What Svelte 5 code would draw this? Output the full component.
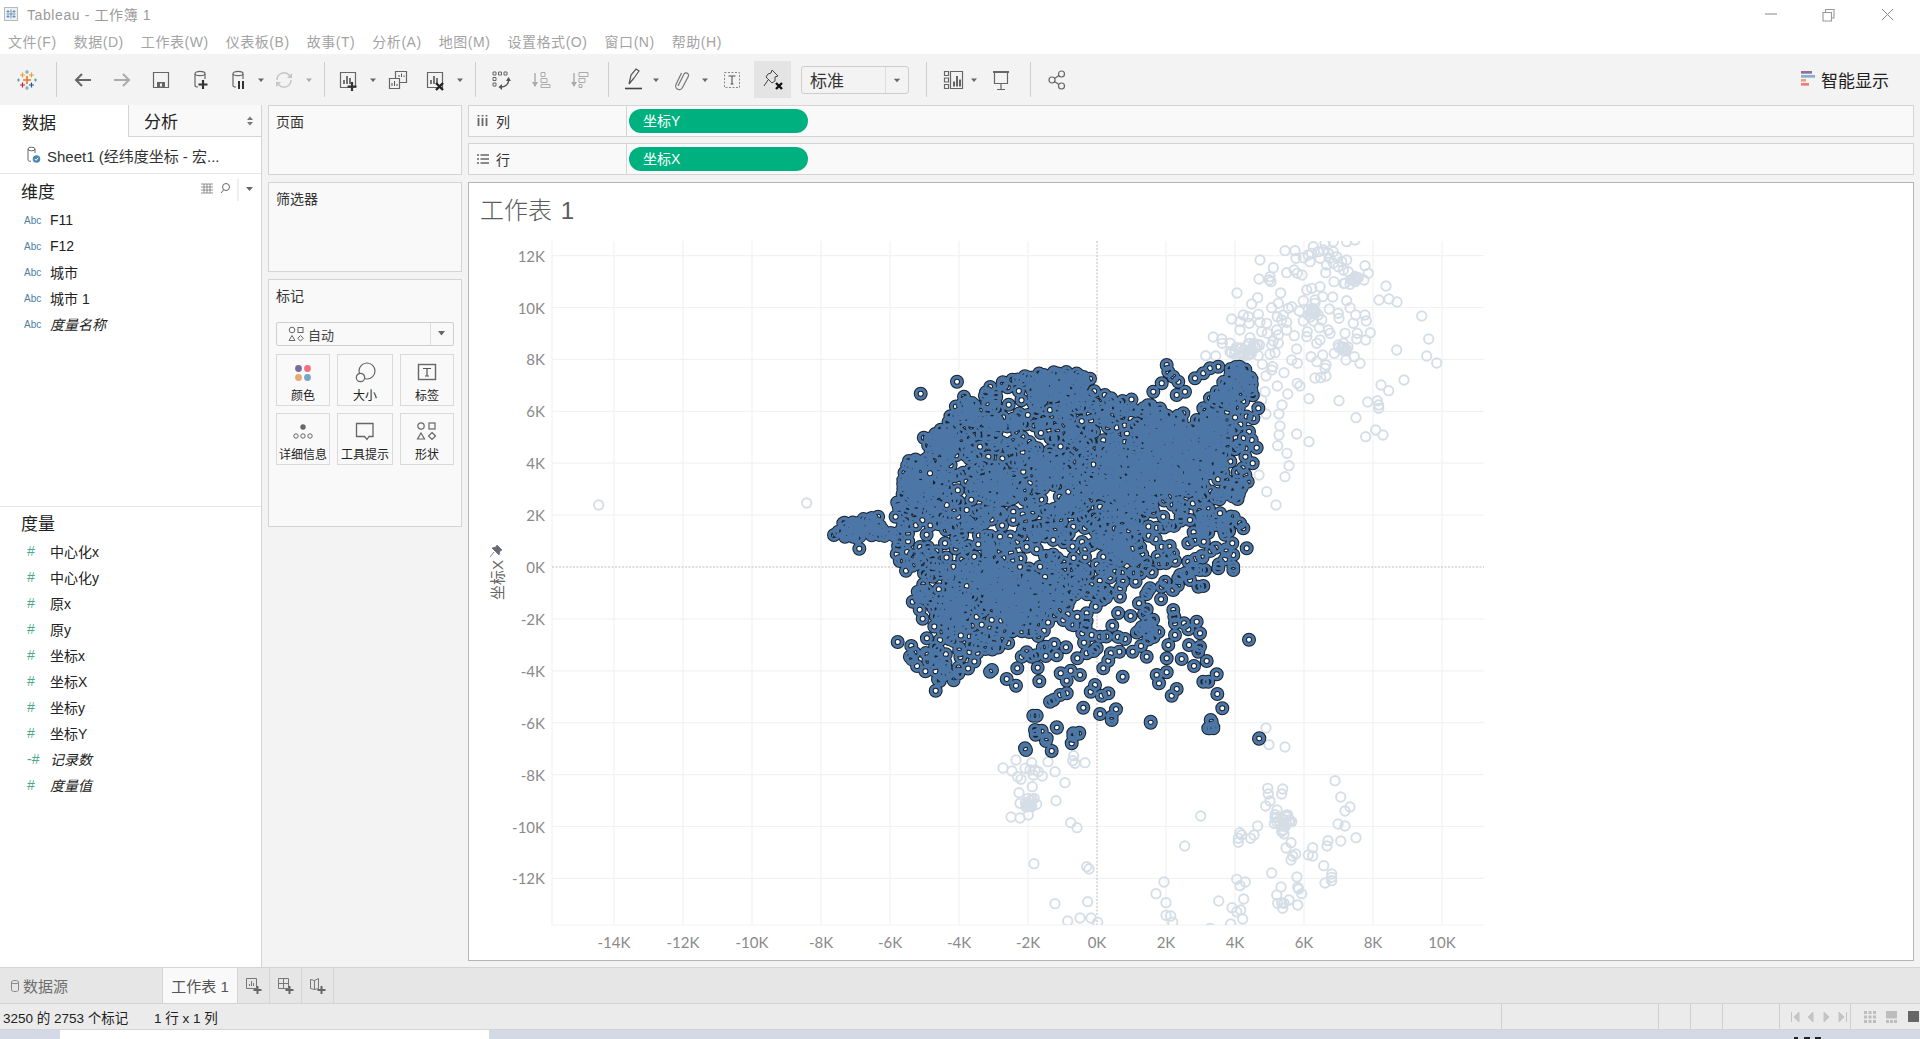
<script>
  const menus = ["文件(F)", "数据(D)", "工作表(W)", "仪表板(B)", "故事(T)", "分析(A)", "地图(M)", "设置格式(O)", "窗口(N)", "帮助(H)"];
  const dims = [["F11"], ["F12"], ["城市"], ["城市 1"], ["度量名称", true]];
  const measures = [["中心化x"], ["中心化y"], ["原x"], ["原y"], ["坐标x"], ["坐标X"], ["坐标y"], ["坐标Y"], ["记录数", true], ["度量值", true]];

  const S = 'fill="none" stroke="#666" stroke-width="1.2"';
  const cyl = `<path d="M7 6v11.5c0 1 1 1.5 3 1.5M17 6v5" ${S}/><ellipse cx="12" cy="5.5" rx="5" ry="2.2" ${S}/>`;
  const bars = `<path d="M8 16v-4M11 16V8M14 16v-6" stroke="#555" stroke-width="1.6"/>`;
  const icons = {
    logo: `<g stroke-width="1.2" fill="none"><path d="M12 8v8M8 12h8" stroke="#e8762b" stroke-width="1.6"/><path d="M7.500 4.500v5M5 7h5M16.500 4.500v5M14 7h5" stroke="#e8a32b"/><path d="M7.500 14.500v5M5 17h5" stroke="#c72035"/><path d="M16.500 14.500v5M14 17h5" stroke="#1f5a96"/><path d="M12 2v4M10 4h4M12 18v4M10 20h4" stroke="#7c9fb5"/><path d="M3.500 10.500v3M2 12h3M20.500 10.500v3M19 12h3" stroke="#5b9ea6"/></g>`,
    back: `<path d="M20 12H5M11 6l-6 6 6 6" fill="none" stroke="#666" stroke-width="2"/>`,
    forward: `<path d="M4 12h15M13 6l6 6-6 6" fill="none" stroke="#aaa" stroke-width="2"/>`,
    save: `<path d="M4.500 4.500h15v15h-15z" ${S}/><path d="M8 14h8v5.500H8z" fill="#666"/><path d="M11 15.500h2v3h-2z" fill="#f3f3f3"/>`,
    addds: `${cyl}<path d="M15 12v9M10.500 16.500h9" stroke="#333" stroke-width="2.200"/>`,
    pause: `${cyl}<path d="M13 13v8M17 13v8" stroke="#333" stroke-width="2"/>`,
    refresh: `<path d="M5 12a7 7 0 0 1 12-5l2 2M19 12a7 7 0 0 1-12 5l-2-2" fill="none" stroke="#c4c4c4" stroke-width="1.400"/><path d="M20 5v5h-5zM4 19v-5h5z" fill="#c4c4c4"/>`,
    sheet: `<path d="M4.500 4.500h15v15h-15z" ${S}/>${bars}<path d="M16 14v9M11.500 18.500h9" stroke="#333" stroke-width="2.200"/>`,
    dup: `<path d="M9.500 3.500h11v11h-11z" ${S}/><path d="M3.500 10.500h10v10h-10z" fill="#f3f3f3" stroke="#666" stroke-width="1.200"/><path d="M13 9V7M15.500 9V5.500M18 9V7.500" stroke="#555"/><path d="M6 18v-3M8.500 18v-5M11 18v-2" stroke="#555"/>`,
    clear: `<path d="M4.500 4.500h15v15h-15z" ${S}/>${bars}<path d="M13 15l7 7M20 15l-7 7" stroke="#222" stroke-width="2.400"/>`,
    swap: `<path d="M4 4h3v3H4zM9.500 4h3v3h-3zM15 4h3v3h-3zM4 9.500h3v3H4zM4 15h3v3H4z" fill="none" stroke="#666" stroke-width="1"/><path d="M19.500 10c1 5-2 9-8 9" fill="none" stroke="#555" stroke-width="1.200"/><path d="M13 16l-3.500 3 3.500 3zM17 13l2.500-4 2.500 4z" fill="#555"/>`,
    asc: `<path d="M6 5v13" stroke="#aaa" stroke-width="1.400"/><path d="M3 14l3 5 3-5z" fill="#aaa"/><path d="M12 4.500h4v4h-4zM12 10.500h6v4h-6zM12 16.500h9v3h-9z" fill="none" stroke="#aaa"/>`,
    desc: `<path d="M6 5v13" stroke="#aaa" stroke-width="1.400"/><path d="M3 14l3 5 3-5z" fill="#aaa"/><path d="M11 4.500h9v4h-9zM11 10.500h6v4h-6zM11 16.500h3v3h-3z" fill="none" stroke="#aaa"/>`,
    pen: `<path d="M7 16l2-9 5-6 3 2-5 7zM7 16l5-6" fill="none" stroke="#555" stroke-width="1.200"/><path d="M3 20.500h17" stroke="#444" stroke-width="1.600"/>`,
    clip: `<path d="M9 18L15 6a2.500 2.500 0 0 1 4.500 2L13.500 19.500a3.500 3.500 0 0 1-6.500-3L12.500 5" fill="none" stroke="#777" stroke-width="1.200"/>`,
    text: `<path d="M4.500 4.500h15v15h-15z" fill="none" stroke="#888" stroke-dasharray="2 1.500"/><path d="M8.500 8h7M12 8v8M10.500 16h3" fill="none" stroke="#555" stroke-width="1.100"/>`,
    pinx: `<path d="M11 2l6 6-3 1 0 4-3 2-6-6 2-3 3-1zM7 12l-4 6" fill="none" stroke="#444" stroke-width="1"/><path d="M15 15l6 6M21 15l-6 6" stroke="#111" stroke-width="2.400"/>`,
    showme: `<path d="M3.500 3.500h4v4h-4zM3.500 10h4v4h-4zM3.500 16.500h4v4h-4zM9.500 3.500h12v17h-12z" fill="none" stroke="#666" stroke-width="1.200"/><path d="M13 18.500v-5M16 18.500V8M19 18.500v-7" stroke="#555" stroke-width="1.800"/>`,
    present: `<path d="M4 4h16" stroke="#666" stroke-width="2"/><path d="M5.500 4.500v11h13v-11M12 15.500v6M8 21.500h8" fill="none" stroke="#666" stroke-width="1.200"/>`,
    share: `<circle cx="7" cy="12" r="3" ${S}/><circle cx="16.500" cy="6" r="3" ${S}/><circle cx="16.500" cy="18" r="3" ${S}/><path d="M9.500 10.500l4.500-3M9.500 13.500l4.500 3" ${S}/>`,
    caret: `<path d="M9 10.500h6l-3 3.500z" fill="#666"/>`,
    caretoff: `<path d="M9 10.500h6l-3 3.500z" fill="#aaa"/>`
  };

  // toolbar items by their centre on the bar, the gap before each one comes from that
  const raw = [
    [27, "logo"], [56, "sep"], [83, "back"], [122, "forward"], [161, "save"], [200, "addds"], [237.5, "pause"], [261, "caret"],
    [284, "refresh"], [309, "caretoff"], [324.5, "sep"], [348, "sheet"], [373, "caret"], [398, "dup"], [435, "clear"], [460, "caret"],
    [475.5, "sep"], [501, "swap"], [541, "asc"], [580, "desc"], [608, "sep"], [634, "pen"], [656, "caret"], [681, "clip"], [705, "caret"],
    [732, "text"], [772.5, "pinx"], [855, "select"], [926.5, "sep"], [953, "showme"], [974, "caret"], [1001, "present"], [1030, "sep"], [1057, "share"]
  ];
  const widthOf = (n) => (n === "sep" ? 1 : n === "select" ? 108 : n === "pinx" ? 37 : 24);
  let end = 0;
  const tools = raw.map(([c, name]) => {
    const w = widthOf(name);
    const gap = c - w / 2 - end;
    end = c + w / 2;
    return { name, w, gap };
  });

  // ---- scatter data, read off the reference ----
  const xTicks = [-14, -12, -10, -8, -6, -4, -2, 0, 2, 4, 6, 8, 10];
  const yTicks = [12, 10, 8, 6, 4, 2, 0, -2, -4, -6, -8, -10, -12];
  const px = (k) => 1097 + k * 34.5;
  const py = (k) => 567 - k * 25.95;

  const from = (ox, oy, list) => list.map(([x, y]) => [ox + x / 3, oy + y / 3]);
  const greyA = from(1190, 235, [[285,47],[315,47],[210,75],[250,98],[207,132],[240,125],[238,135],[243,140],[290,113],[312,105],[322,115],[336,120],[318,70],[340,68],[355,60],[370,35],[385,50],[400,45],[415,55],[430,50],[440,65],[455,80],[470,75],[360,80],[410,90],[430,85],[445,95],[460,105],[475,110],[525,92],[535,115],[407,113],[432,140],[465,145],[480,148],[495,140],[505,128],[522,135],[588,153],[567,195],[597,192],[621,201],[141,174],[203,188],[185,207],[272,174],[350,165],[365,160],[390,155],[340,197],[375,195],[398,185],[428,186],[470,197],[480,218],[245,218],[265,205],[295,220],[305,215],[328,228],[418,222],[445,235],[447,250],[125,252],[160,240],[175,245],[205,238],[150,260],[178,265],[210,262],[230,265],[262,245],[280,240],[275,255],[290,262],[340,258],[355,240],[370,235],[385,240],[395,255],[368,220],[375,205],[355,225],[497,240],[525,240],[529,258],[490,265],[695,243],[70,306],[95,312],[97,325],[150,285],[215,290],[232,295],[260,285],[290,285],[265,300],[313,302],[352,290],[350,305],[388,278],[415,285],[420,295],[465,295],[502,295],[500,312],[527,315],[541,293],[716,312],[180,308],[250,318],[245,330],[265,325],[380,325],[390,315],[320,342],[445,330],[455,340],[460,325],[470,345],[433,355],[620,345],[47,362],[77,363],[120,350],[135,345],[150,355],[170,350],[195,340],[240,358],[255,353],[363,365],[380,380],[398,360],[305,375],[322,385],[468,375],[493,365],[510,385],[710,363],[740,384],[217,388],[248,395],[245,405],[408,390],[405,400],[282,413],[228,423],[375,429],[392,428],[408,423],[322,445],[330,453],[262,453],[642,435],[573,450],[596,467],[225,470],[293,477],[357,491],[447,497],[533,501],[562,497],[566,510],[566,520],[276,510],[215,495],[228,537],[267,537],[498,548],[270,573],[267,600],[320,597],[357,620],[527,605],[557,585],[579,600],[263,632],[291,655],[297,692],[207,720],[285,725],[230,770],[258,810],[470,20],[495,15],[430,20],[405,25],[365,55],[390,70],[420,70]]);
  const greyB = from(980, 720, [[858,24],[867,74],[915,81],[108,120],[69,144],[96,153],[135,145],[155,128],[150,150],[165,150],[175,155],[187,168],[113,170],[123,178],[160,165],[204,125],[225,155],[281,107],[278,122],[285,130],[315,128],[255,188],[157,200],[117,218],[120,250],[145,235],[150,250],[140,255],[155,260],[170,253],[228,242],[145,285],[93,291],[120,294],[272,308],[291,323],[1065,182],[863,205],[865,222],[908,207],[905,222],[870,243],[857,258],[1082,231],[1110,261],[1095,273],[891,270],[885,292],[890,305],[905,295],[920,290],[930,300],[935,305],[900,315],[915,320],[910,330],[905,335],[912,342],[662,288],[833,318],[1074,312],[1095,318],[780,338],[785,345],[775,355],[775,367],[812,355],[822,345],[1128,353],[1082,363],[1044,362],[1041,378],[933,368],[918,384],[998,383],[985,405],[998,408],[947,402],[938,408],[933,420],[614,378],[1031,437],[162,431],[320,440],[327,447],[875,459],[1055,462],[1055,472],[1055,482],[1035,489],[951,471],[552,486],[770,478],[796,486],[780,497],[903,501],[953,502],[956,507],[965,521],[528,521],[890,525],[791,537],[716,543],[927,540],[893,550],[905,548],[912,550],[908,565],[953,555],[558,548],[225,551],[323,545],[756,563],[782,570],[770,575],[558,586],[572,588],[300,594],[333,594],[263,603],[353,607],[578,607],[788,597],[752,612],[690,625]]);
  const greyC = from(470, 480, [[386,75],[1010,69]]);

  const blueA = from(820, 340, [[302,161],[411,125],[432,170],[810,116],[1040,75],[1095,155],[1210,128],[1315,205],[1287,275],[1295,300],[1310,323],[1298,370],[1283,425],[1268,385],[1255,315],[118,626],[258,692],[293,755],[278,785],[233,906],[347,1052],[560,1017],[588,1037],[658,1024],[592,985],[605,950],[635,950],[653,983],[516,990],[510,995],[678,920],[703,912],[738,922],[677,948],[710,946],[722,1000],[752,992],[780,1005],[740,1022],[772,955],[800,940],[830,925],[792,908],[827,800],[800,820],[772,830],[797,860],[815,885],[840,890],[787,880],[865,962],[850,985],[898,935],[915,897],[938,935],[963,918],[980,950],[908,1010],[1040,955],[1085,957],[1122,978],[1160,963],[1045,915],[1107,915],[1140,920],[1135,935],[1140,880],[1105,868],[1065,885],[1092,850],[1130,845],[1060,810],[1063,830],[1065,850],[1287,899],[1040,997],[1010,1005],[1017,1030],[1070,1047],[1055,1067],[825,1035],[812,1055],[845,1067],[865,1060],[790,1103],[888,1108],[840,1122],[875,1130],[992,1145],[1207,1105],[1192,1062],[1190,1003],[1165,1025],[1150,1025],[700,1080],[690,1085],[720,1065],[740,1060],[710,1162],[640,1127],[650,1127],[645,1170],[665,1172],[680,1195],[760,1180],[778,1178],[1172,1140],[1165,1165],[1180,1165],[1318,1195],[1280,625],[1237,610],[1240,645],[1215,658],[1187,623],[1145,648],[1240,680],[1240,690],[1025,620],[1048,620],[1045,650],[1065,662],[1105,665],[1020,670],[1060,750],[1135,740],[1150,738],[1165,578],[1150,578],[1270,565],[1260,550],[1105,610],[1025,740],[990,745],[1155,690],[1195,685],[1105,700],[1125,115],[1150,100],[1170,85],[1195,80],[1075,125],[1060,110],[1045,95],[1025,130],[1000,155],[1070,165],[1090,220],[1130,240],[1150,205],[1170,175],[1190,155],[1210,165],[1230,185],[1300,235],[1080,705],[1095,700],[1120,690],[1140,690],[1075,715],[1110,720],[42,585],[55,575],[70,550],[75,590],[100,590],[105,550],[150,545],[180,570]]);
  const blueB = from(980, 720, [[231,23],[167,44],[185,35],[198,63],[215,93],[135,85],[138,90],[275,70],[280,48],[297,41],[512,8],[690,25],[700,22],[695,5],[837,56],[395,0]]);

  const outline = [[35,585],[70,545],[150,530],[215,515],[240,470],[240,400],[275,340],[305,295],[375,250],[410,195],[530,130],[650,95],[770,95],[850,155],[950,170],[1030,205],[1090,230],[1100,262],[1140,240],[1180,170],[1205,130],[1240,70],[1300,85],[1315,130],[1290,200],[1290,240],[1280,340],[1280,420],[1250,510],[1230,590],[1130,560],[1000,570],[970,640],[1000,700],[980,800],[1020,880],[990,910],[930,830],[880,780],[780,760],[680,880],[580,870],[540,930],[480,950],[430,1020],[350,1030],[270,960],[260,910],[300,880],[290,800],[300,720],[250,680],[210,630],[205,600],[120,600]];
  const insidePoly = (shape, x, y) => {
    let hit = false;
    for (let i = 0, j = shape.length - 1; i < shape.length; j = i++) {
      const [xi, yi] = shape[i], [xj, yj] = shape[j];
      if (yi > y !== yj > y && x < ((xj - xi) * (y - yi)) / (yj - yi) + xi) hit = !hit;
    }
    return hit;
  };
  const shape = from(820, 340, outline);
  const inside = (x, y) => insidePoly(shape, x, y);
  // looser parts of the mass where single rings still read
  const loose = [
    [[1000,570],[1130,560],[1230,590],[1240,680],[1150,740],[1060,760],[1000,790],[1000,700],[970,640]],
    [[780,760],[880,780],[930,830],[990,910],[940,950],[850,960],[780,900],[700,880]],
    [[580,870],[680,880],[720,900],[660,970],[560,960],[540,930]]
  ].map((p) => from(820, 340, p));

  let seed = 20240611;
  const rnd = () => (seed = (seed * 16807) % 2147483647) / 2147483647;

  // smooth solid patches of the mass (x, y, radius in the crop's scale)
  const solid = [[710,140,85],[290,420,65],[1080,320,140],[920,430,95],[600,760,95],[400,830,60],[1000,870,40],[900,620,40],[480,700,50],[700,390,50],[540,440,55],[370,300,50],[1250,110,50],[80,580,45],[150,560,30]].map(([x, y, r]) => [820 + x / 3, 340 + y / 3, r / 3]);

  // white centres that stay open inside the mass
  const holes = from(820, 340, [[505,350],[610,395],[745,455],[650,628],[795,652],[600,680],[400,680],[580,515],[620,620],[700,600],[760,560],[540,590],[440,510],[380,495],[330,400],[480,320],[690,210],[580,540],[850,650],[900,770],[470,830],[515,840],[360,900],[730,840],[1030,530],[1110,540],[1200,520],[840,500],[660,680]]);
  for (let n = 0; n < 140; n++) {
    const x = 830 + rnd() * 420, y = 400 + rnd() * 290;
    if (!inside(x, y)) continue;
    if (solid.some(([a, b, r]) => Math.hypot(a - x, b - y) < r)) continue;
    if (holes.some(([a, b]) => Math.hypot(a - x, b - y) < 13)) continue;
    holes.push([x, y]);
  }
  const blue = [...blueA, ...blueB, ...holes];
  for (let y = 360; y < 700; y += 5.2) {
    for (let x = 825; x < 1265; x += 5.2) {
      const a = x + (rnd() - 0.5) * 4.5, b = y + (rnd() - 0.5) * 4.5;
      if (!inside(a, b)) {
        if (loose.some((p) => insidePoly(p, a, b)) && rnd() < 0.13) blue.push([a, b]);
        continue;
      }
      if (holes.some(([p, q]) => Math.hypot(p - a, q - b) < 8)) continue;
      const dense = solid.some(([p, q, r]) => Math.hypot(p - a, q - b) < r);
      if (!dense && rnd() < 0.45) continue;
      blue.push([a, b]);
    }
  }
  const clump = (cx, cy, rx, ry, n) => Array.from({ length: n }, () => [cx + (rnd() - 0.5) * rx, cy + (rnd() - 0.5) * ry]);
  const grey = [...greyA, ...greyB, ...greyC,
    ...clump(1245, 350, 30, 14, 22), ...clump(1315, 315, 12, 12, 10), ...clump(1343, 347, 10, 8, 7), ...clump(1350, 280, 14, 8, 7),
    ...clump(1030, 803, 10, 10, 10), ...clump(1282, 820, 16, 12, 12)];

  const rings = (list, r) => list.map(([x, y]) => `M${(x - r).toFixed(1)} ${y.toFixed(1)}a${r} ${r} 0 1 0 ${2 * r} 0a${r} ${r} 0 1 0 ${-2 * r} 0`).join("");
  const greyPath = rings(grey, 4.7);
  const bluePath = rings(blue, 4.5);
</script>

<div class="app">
  <header class="titlebar">
    <svg class="appicon" width="16" height="16" viewBox="0 0 16 16">
      <rect x="1.500" y="1.500" width="13" height="13" fill="#eef1f4" stroke="#b9b9b9" />
      <path d="M8 3.500v9M3.500 8h9M5 4v3M3.500 5.500h3M11 4v3M9.500 5.500h3M5 9v3M3.500 10.500h3M11 9v3M9.500 10.500h3" stroke="#6b93b8" stroke-width="1" />
    </svg>
    <span class="apptitle">Tableau - 工作簿 1</span>
    <div class="winbtns">
      <svg width="129" height="24" viewBox="0 0 129 24">
        <path d="M0 11h12" stroke="#999" stroke-width="1.200" />
        <path d="M58 9.500h8.500v8.500h-8.500zM60.500 9V6.500h8.500v8.500h-2.500" fill="none" stroke="#999" stroke-width="1.100" />
        <path d="M117 6l11 11M128 6l-11 11" stroke="#888" />
      </svg>
    </div>
  </header>

  <nav class="menubar">
    {#each menus as m}<span>{m}</span>{/each}
  </nav>

  <div class="toolbar">
    {#each tools as t}
      <div class="tool" style="width:{t.w}px;margin-left:{t.gap}px">
        {#if t.name === "sep"}
          <i class="sep"></i>
        {:else if t.name === "select"}
          <div class="fitselect"><span>标准</span><b><svg width="24" height="24" viewBox="0 0 24 24"><path d="M8.500 10.500h7l-3.500 4z" fill="#666" /></svg></b></div>
        {:else if t.name === "pinx"}
          <div class="activebtn"><svg width="24" height="24" viewBox="0 0 24 24">{@html icons[t.name]}</svg></div>
        {:else}
          <svg width="24" height="24" viewBox="0 0 24 24">{@html icons[t.name]}</svg>
        {/if}
      </div>
    {/each}
    <div class="showme">
      <svg width="14" height="18" viewBox="0 0 14 18"><path d="M0 0h11v2.700H0z" fill="#8b739d" /><path d="M0 4h14v2.700H0z" fill="#8aaed1" /><path d="M0 8h5v2.700H0z" fill="#e6aa71" /><path d="M0 12h8v2.700H0z" fill="#f07a84" /></svg>
      <span>智能显示</span>
    </div>
  </div>

  <main class="body">
    <aside class="datapane">
      <div class="panetabs">
        <span class="ptab on">数据</span>
        <span class="ptab">分析<svg width="6" height="10" viewBox="0 0 6 10"><path d="M0 4l3-3.500L6 4zM0 6l3 3.500L6 6z" fill="#777" /></svg></span>
      </div>
      <div class="source">
        <svg width="16" height="18" viewBox="0 0 16 18"><path d="M2 3v11c0 .8 1 1.300 3 1.300M9 3v4" fill="none" stroke="#666" /><ellipse cx="5.500" cy="3" rx="3.500" ry="1.800" fill="none" stroke="#666" /><circle cx="10.500" cy="13" r="3.800" fill="#4e8ab0" /><path d="M8.800 13l1.300 1.300 2-2.500" fill="none" stroke="#fff" /></svg>
        <span>Sheet1 (经纬度坐标 - 宏...</span>
      </div>
      <section class="dims">
        <div class="sechead">
          <span>维度</span>
          <svg class="headtools" width="62" height="22" viewBox="0 0 62 22">
            <path d="M2 5h12M2 8h12M2 11h12M2 14h12M5 5v9M8 5v9M11 5v9" stroke="#777" stroke-width=".8" />
            <circle cx="27" cy="8" r="3.500" fill="none" stroke="#666" /><path d="M24.500 11l-2.500 3" stroke="#666" />
            <path d="M39 0v22" stroke="#ddd" />
            <path d="M47 8h7l-3.500 4z" fill="#666" />
          </svg>
        </div>
        {#each dims as [name, calc]}
          <div class="field"><span class="abc">Abc</span><span class:calc>{name}</span></div>
        {/each}
      </section>
      <section class="meas">
        <div class="sechead"><span>度量</span></div>
        {#each measures as [name, calc]}
          <div class="field">
            <span class="hash">{name === "记录数" ? "-#" : "#"}</span><span class:calc>{name}</span>
          </div>
        {/each}
      </section>
    </aside>

    <div class="cards">
      <div class="card pages"><h4>页面</h4></div>
      <div class="card filters"><h4>筛选器</h4></div>
      <div class="card marks">
        <h4>标记</h4>
        <div class="marktype">
          <svg width="16" height="16" viewBox="0 0 16 16"><circle cx="4" cy="4" r="2.800" fill="none" stroke="#666" /><rect x="10" y="1.500" width="5" height="5" fill="none" stroke="#666" /><path d="M4 9.500l3 5H1z" fill="none" stroke="#666" /><path d="M12.500 9.500l2.800 2.800-2.800 2.800-2.800-2.800z" fill="none" stroke="#666" /></svg>
          <span>自动</span>
          <b><svg width="10" height="6" viewBox="0 0 10 6"><path d="M1 0h7l-3.500 4.500z" fill="#666" /></svg></b>
        </div>
        <div class="markgrid">
          <div class="mbtn">
            <svg width="24" height="24" viewBox="0 0 24 24"><circle cx="7.500" cy="7.500" r="3.400" fill="#7c6a9c" /><circle cx="16.500" cy="7.500" r="3.400" fill="#f0717c" /><circle cx="7.500" cy="16.500" r="3.400" fill="#e6aa71" /><circle cx="16.500" cy="16.500" r="3.400" fill="#77a5cc" /></svg>
            <span>颜色</span>
          </div>
          <div class="mbtn">
            <svg width="24" height="24" viewBox="0 0 24 24"><circle cx="14" cy="10" r="8" fill="none" stroke="#666" stroke-width="1.200" /><circle cx="7.500" cy="16.500" r="4.200" fill="#f9f9f9" stroke="#666" stroke-width="1.200" /></svg>
            <span>大小</span>
          </div>
          <div class="mbtn">
            <svg width="24" height="24" viewBox="0 0 24 24"><rect x="3.500" y="3.500" width="17" height="15" fill="none" stroke="#666" stroke-width="1.400" /><path d="M8 7.500h8M12 7.500v7.500M10 15h4" fill="none" stroke="#555" stroke-width="1.200" /></svg>
            <span>标签</span>
          </div>
          <div class="mbtn">
            <svg width="24" height="24" viewBox="0 0 24 24"><circle cx="12" cy="7" r="2.700" fill="#666" /><circle cx="5" cy="16" r="2.200" fill="none" stroke="#666" /><circle cx="12" cy="16" r="2.200" fill="none" stroke="#666" /><circle cx="19" cy="16" r="2.200" fill="none" stroke="#666" /></svg>
            <span>详细信息</span>
          </div>
          <div class="mbtn">
            <svg width="24" height="24" viewBox="0 0 24 24"><path d="M3.500 3.500h16.500v13h-4l-2 3-2.500-3h-8z" fill="none" stroke="#666" stroke-width="1.300" /></svg>
            <span>工具提示</span>
          </div>
          <div class="mbtn">
            <svg width="24" height="24" viewBox="0 0 24 24"><circle cx="6" cy="6" r="3.200" fill="none" stroke="#666" stroke-width="1.200" /><rect x="14" y="3" width="6" height="6" fill="none" stroke="#666" stroke-width="1.200" /><path d="M6 13l3.500 6h-7z" fill="none" stroke="#666" stroke-width="1.200" /><path d="M17 12.500l3.500 3.500-3.500 3.500-3.500-3.500z" fill="none" stroke="#666" stroke-width="1.200" /></svg>
            <span>形状</span>
          </div>
        </div>
      </div>
    </div>

    <div class="workspace">
      <div class="shelf">
        <div class="shelflabel">
          <svg width="14" height="14" viewBox="0 0 14 14"><path d="M2.500 4v8M6.500 4v8M10.500 4v8M2.500 1v1.500M6.500 1v1.500M10.500 1v1.500" stroke="#666" stroke-width="1.800" /></svg>
          <span>列</span>
        </div>
        <span class="pill">坐标Y</span>
      </div>
      <div class="shelf">
        <div class="shelflabel">
          <svg width="14" height="14" viewBox="0 0 14 14"><path d="M1 3h2M4.500 3H13M1 7h2M4.500 7H13M1 11h2M4.500 11H13" stroke="#666" stroke-width="1.500" /></svg>
          <span>行</span>
        </div>
        <span class="pill">坐标X</span>
      </div>
      <div class="view">
        <h2>工作表 1</h2>
        <svg class="chart" width="1443" height="729" viewBox="469 231 1443 729">
          <defs><clipPath id="plot"><rect x="552" y="241" width="932" height="684" /></clipPath></defs>
          <g stroke="#f1f2f3" stroke-width="1.200">
            <path d="M552 241V925H1484" fill="none" />
            {#each xTicks as k}{#if k !== 0}<path d="M{px(k)} 241V925" />{/if}{/each}
            {#each yTicks as k}{#if k !== 0}<path d="M552 {py(k)}H1484" />{/if}{/each}
          </g>
          <path d="M552 567H1484M1097 241V925" stroke="#bdbdbd" stroke-dasharray="2 1.500" />
          <g clip-path="url(#plot)">
            <path d={greyPath} fill="none" stroke="#d5dee6" stroke-width="1.900" />
            <path d={bluePath} fill="none" stroke="#18222e" stroke-width="5" />
            <path d={bluePath} fill="none" stroke="#4b76a5" stroke-width="3" />
          </g>
          <g class="ticks">
            {#each yTicks as k}<text x="545" y={py(k) + 6} text-anchor="end">{k}K</text>{/each}
            {#each xTicks as k}<text x={px(k)} y="948" text-anchor="middle">{k}K</text>{/each}
          </g>
          <text class="axistitle" transform="translate(503 600) rotate(-90)">坐标X</text>
          <path d="M497 545l5 5-2 1-1 4-7-7 4-1zM494 552l-4 5" fill="#666c75" stroke="#666c75" stroke-width=".8" />
        </svg>
      </div>
    </div>
  </main>

  <div class="tabs">
    <div class="tab source-tab">
      <svg width="10" height="14" viewBox="0 0 10 14"><path d="M1.500 3v8c0 1 1.500 1.500 3.500 1.500S8.500 12 8.500 11V3C8.500 2 7 1.500 5 1.500S1.500 2 1.500 3zM1.500 4c1 .8 6 .8 7 0" fill="none" stroke="#888" /></svg>
      <span>数据源</span>
    </div>
    <div class="tab on">工作表 1</div>
    <div class="tab icon"><svg width="18" height="18" viewBox="0 0 18 18"><path d="M1.500 1.500h10v10h-10z" fill="none" stroke="#777" /><path d="M4.500 9V7M6.500 9V4M8.500 9V6" stroke="#777" /><path d="M12.500 9v8M8.500 13h8" stroke="#666" stroke-width="2" /></svg></div>
    <div class="tab icon"><svg width="18" height="18" viewBox="0 0 18 18"><path d="M1.500 1.500h10v10h-10zM6.500 1.500v10M1.500 6.500h10" fill="none" stroke="#777" /><path d="M12.500 9v8M8.500 13h8" stroke="#666" stroke-width="2" /></svg></div>
    <div class="tab icon"><svg width="18" height="18" viewBox="0 0 18 18"><path d="M1.500 2.500l4 1 4-2v10l-4 1-4-1zM5.500 3.500v9" fill="none" stroke="#777" /><path d="M12.500 9v8M8.500 13h8" stroke="#666" stroke-width="2" /></svg></div>
  </div>

  <footer class="status">
    <span class="count">3250 的 2753 个标记</span>
    <span>1 行 x 1 列</span>
    <div class="statcells">
      <i class="c1"></i><i class="c2"></i><i class="c2"></i><i class="c4"></i>
      <div class="pager">
        <svg width="56" height="12" viewBox="0 0 56 12"><path d="M.5 1v10M8 1L3 6l5 5zM22 1l-5 5 5 5zM33 1l5 5-5 5zM48 1l5 5-5 5zM55.500 1v10" fill="#c4c4c4" stroke="#c4c4c4" /></svg>
      </div>
      <div class="viewmodes">
        <svg width="56" height="12" viewBox="0 0 56 12"><path d="M0 0h3v3H0zM4.500 0h3v3h-3zM9 0h3v3H9zM0 4.500h3v3H0zM4.500 4.500h3v3h-3zM9 4.500h3v3H9zM0 9h3v3H0zM4.500 9h3v3h-3zM9 9h3v3H9z" fill="#bdbdbd" /><path d="M22 0h11v7.500H22zM22 9h3v3h-3zM26 9h3v3h-3zM30 9h3v3h-3z" fill="#bdbdbd" /><path d="M44 0h11v11H44z" fill="#666" /></svg>
      </div>
    </div>
  </footer>

  <div class="taskbar">
    <i class="winpiece"></i>
    <svg class="clipped" width="28" height="2" viewBox="0 0 28 2"><path d="M0 0h4v2H0zM10 0h6v2h-6zM21 0h6v2h-6z" fill="#222" /></svg>
  </div>
</div>

<style>
  :global(body) {
    margin: 0;
    background: #fff;
  }

  .app {
    width: 1920px;
    height: 1039px;
    display: flex;
    flex-direction: column;
    overflow: hidden;
    font-family: "Liberation Sans", "Noto Sans CJK SC", sans-serif;
    color: #222;
  }

  .titlebar {
    height: 27px;
    flex: none;
    display: flex;
    align-items: center;
    padding-left: 3px;
    color: #9a9a9a;
    font-size: 14px;
    letter-spacing: .6px;
  }
  .apptitle {
    margin-left: 8px;
  }
  .appicon {
    flex: none;
  }
  .winbtns {
    margin-left: auto;
    margin-right: 26px;
    height: 24px;
    margin-top: 2px;
  }

  .menubar {
    height: 27px;
    flex: none;
    display: flex;
    align-items: center;
    gap: 17px;
    padding-left: 8px;
    font-size: 14px;
    letter-spacing: .55px;
    color: #a3a3a3;
  }

  .toolbar {
    height: 51px;
    flex: none;
    background: #f3f3f3;
    display: flex;
    align-items: center;
  }
  .tool {
    flex: none;
    height: 37px;
    display: flex;
    align-items: center;
    justify-content: center;
  }
  .activebtn {
    width: 37px;
    height: 37px;
    background: #e4e4e4;
    display: flex;
    align-items: center;
    justify-content: center;
  }
  .sep {
    width: 1px;
    height: 35px;
    background: #cfcfcf;
    flex: none;
  }
  .fitselect {
    width: 108px;
    height: 28px;
    flex: none;
    box-sizing: border-box;
    border: 1px solid #cdcdcd;
    border-radius: 3px;
    display: flex;
    align-items: center;
    font-size: 17px;
    color: #333;
  }
  .fitselect span {
    flex: 1;
    padding-left: 8px;
  }
  .fitselect b {
    width: 22px;
    height: 100%;
    border-left: 1px solid #ddd;
    display: flex;
    align-items: center;
    justify-content: center;
  }
  .showme {
    margin-left: auto;
    margin-right: 31px;
    display: flex;
    align-items: center;
    gap: 6px;
    font-size: 17px;
    color: #222;
  }

  .body {
    height: 862px;
    flex: none;
    display: flex;
    background: #f3f3f3;
  }

  .datapane {
    width: 262px;
    box-sizing: border-box;
    flex: none;
    background: #fff;
    border-right: 1px solid #d4d4d4;
    display: flex;
    flex-direction: column;
  }
  .panetabs {
    height: 32px;
    flex: none;
    display: flex;
    font-size: 17px;
    color: #222;
  }
  .ptab {
    display: flex;
    align-items: center;
    justify-content: space-between;
    box-sizing: border-box;
    flex: 1;
    padding: 0 8px 0 15px;
    background: #f9f9f9;
    border-left: 1px solid #d4d4d4;
    border-bottom: 1px solid #d4d4d4;
  }
  .ptab.on {
    flex: none;
    width: 128px;
    padding-left: 22px;
    background: #fff;
    border: 0;
  }
  .source {
    height: 37px;
    flex: none;
    box-sizing: border-box;
    border-bottom: 1px solid #e6e6e6;
    display: flex;
    align-items: center;
    gap: 5px;
    padding-left: 26px;
    font-size: 15px;
    color: #333;
  }
  .dims {
    height: 333px;
    flex: none;
    box-sizing: border-box;
    border-bottom: 1px solid #e6e6e6;
  }
  .sechead {
    height: 33px;
    display: flex;
    align-items: center;
    padding: 0 0 1px 21px;
    box-sizing: border-box;
    font-size: 17px;
    color: #222;
  }
  .headtools {
    margin-left: auto;
  }
  .field {
    height: 26px;
    display: flex;
    align-items: center;
    font-size: 14px;
    color: #222;
  }
  .abc {
    width: 50px;
    padding-left: 24px;
    box-sizing: border-box;
    font: 10px "Liberation Sans", sans-serif;
    color: #4e7ea3;
  }
  .hash {
    width: 50px;
    padding-left: 27px;
    box-sizing: border-box;
    font: 14px "Liberation Sans", sans-serif;
    color: #4ea98c;
  }
  .calc {
    font-style: italic;
  }
  .meas .sechead {
    height: 31px;
    padding-bottom: 1px;
  }

  .cards {
    width: 194px;
    flex: none;
    margin: 0 6px;
    display: flex;
    flex-direction: column;
    gap: 7px;
  }
  .card {
    box-sizing: border-box;
    border: 1px solid #d4d4d4;
    background: #f9f9f9;
    padding: 6px 7px;
  }
  h4 {
    margin: 0;
    font-size: 14px;
    font-weight: 400;
    line-height: 20px;
    color: #333;
  }
  .pages {
    height: 70px;
  }
  .filters {
    height: 90px;
  }
  .marks {
    height: 248px;
  }
  .marktype {
    height: 24px;
    margin-top: 16px;
    box-sizing: border-box;
    border: 1px solid #cfcfcf;
    border-radius: 2px;
    display: flex;
    align-items: center;
    gap: 4px;
    padding-left: 11px;
    font-size: 13px;
    color: #444;
  }
  .marktype b {
    margin-left: auto;
    width: 22px;
    height: 100%;
    border-left: 1px solid #ddd;
    display: flex;
    align-items: center;
    justify-content: center;
  }
  .markgrid {
    margin-top: 8px;
    display: grid;
    grid-template-columns: 54px 56px 54px;
    grid-auto-rows: 52px;
    gap: 7px;
  }
  .mbtn {
    box-sizing: border-box;
    border: 1px solid #d9d9d9;
    display: flex;
    flex-direction: column;
    align-items: center;
    padding-top: 6px;
    font-size: 12px;
    line-height: 18px;
    color: #222;
    white-space: nowrap;
  }
  .mbtn span {
    margin-top: 2px;
  }

  .workspace {
    flex: 1;
    min-width: 0;
    padding-right: 6px;
    display: flex;
    flex-direction: column;
    gap: 6px;
  }
  .shelf {
    height: 32px;
    flex: none;
    box-sizing: border-box;
    border: 1px solid #d4d4d4;
    background: #f9f9f9;
    display: flex;
    align-items: center;
  }
  .shelflabel {
    width: 158px;
    height: 100%;
    box-sizing: border-box;
    border-right: 1px solid #d4d4d4;
    display: flex;
    align-items: center;
    gap: 6px;
    padding-left: 7px;
    font-size: 14px;
    color: #333;
  }
  .pill {
    width: 179px;
    height: 24px;
    margin-left: 2px;
    padding-left: 14px;
    box-sizing: border-box;
    border-radius: 12px;
    background: #00b180;
    color: #fff;
    font-size: 14px;
    line-height: 24px;
  }
  .view {
    flex: none;
    height: 779px;
    margin-top: 1px;
    box-sizing: border-box;
    border: 1px solid #b5b5b5;
    background: #fff;
    display: flex;
    flex-direction: column;
  }
  .view h2 {
    margin: 0;
    height: 48px;
    padding: 11px 0 0 11px;
    box-sizing: border-box;
    font-size: 24px;
    font-weight: 300;
    line-height: 34px;
    word-spacing: 2px;
    color: #5c5c5c;
  }
  .chart {
    display: block;
    flex: none;
  }
  .ticks text {
    font: 15px Lato, "Open Sans", sans-serif;
    fill: #8a8a8a;
  }
  .axistitle {
    font-size: 15px;
    fill: #666;
  }

  .tabs {
    height: 37px;
    flex: none;
    box-sizing: border-box;
    border-top: 1px solid #d4d4d4;
    border-bottom: 1px solid #d4d4d4;
    background: #e6e6e6;
    display: flex;
    font-size: 15px;
    color: #6e6e6e;
  }
  .tab {
    display: flex;
    align-items: center;
    justify-content: center;
    box-sizing: border-box;
  }
  .source-tab {
    width: 162px;
    justify-content: flex-start;
    gap: 3px;
    padding-left: 10px;
  }
  .tab.on {
    width: 76px;
    background: #f9f9f9;
    border-left: 1px solid #d4d4d4;
    border-right: 1px solid #d4d4d4;
    color: #555;
  }
  .tab.icon {
    width: 32px;
    border-right: 1px solid #d4d4d4;
  }

  .status {
    height: 26px;
    flex: none;
    box-sizing: border-box;
    border-bottom: 1px solid #d4d4d4;
    background: #ebebeb;
    display: flex;
    align-items: center;
    font-size: 13.500px;
    color: #222;
  }
  .count {
    margin-left: 3px;
    width: 151px;
  }
  .statcells {
    margin-left: auto;
    height: 100%;
    display: flex;
  }
  .statcells i {
    display: block;
    border-left: 1px solid #cfcfcf;
    box-sizing: border-box;
  }
  .c1 {
    width: 157px;
  }
  .c2 {
    width: 32px;
  }
  .c4 {
    width: 57px;
  }
  .pager,
  .viewmodes {
    border-left: 1px solid #cfcfcf;
    display: flex;
    align-items: center;
    box-sizing: border-box;
  }
  .pager {
    width: 71px;
    padding-left: 11px;
  }
  .viewmodes {
    width: 70px;
    padding-left: 13px;
  }

  .taskbar {
    height: 9px;
    flex: none;
    background: #d3dae6;
    display: flex;
  }
  .winpiece {
    display: block;
    margin-left: 60px;
    width: 429px;
    background: #fff;
  }
  .clipped {
    margin: 7px 0 0 1305px;
  }
</style>
